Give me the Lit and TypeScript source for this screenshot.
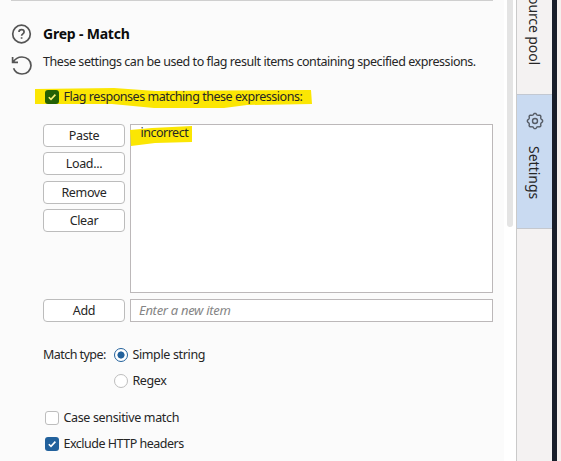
import { LitElement, html, svg, css } from "lit";
import { customElement } from "lit/decorators.js";

const gear = () => {
  let d = "";
  const n = 64;
  for (let i = 0; i < n; i++) {
    const a = (i / n) * Math.PI * 2;
    const r = 7 + 0.65 * Math.tanh(2 * Math.cos(8 * a));
    d += `${i ? "L" : "M"}${(9 + r * Math.cos(a)).toFixed(2)} ${(9 + r * Math.sin(a)).toFixed(2)}`;
  }
  return svg`<path d=${d + "Z"} /><circle cx="9" cy="9" r="2.5" />`;
};

const tick = html`<svg class="tick" viewBox="0 0 14 14"><path d="M3.8 7.2 6 9.4 10.4 4.6" /></svg>`;

@customElement("app-root")
export class AppRoot extends LitElement {
  static styles = css`
    :host {
      display: flex;
      width: 561px;
      height: 461px;
      overflow: hidden;
      background: #fff;
      color: #262626;
      font: 12.5px/20px "Noto Sans", sans-serif;
      white-space: nowrap;
    }
    svg { display: block; fill: none; }
    .main {
      box-sizing: border-box;
      width: 504px;
      padding: 0 11px;
      background: #fbfbfb;
      flex: none;
    }
    .rule { height: 1px; background: #cfcfcf; }
    .row { display: flex; align-items: center; }
    .head { height: 32px; margin-top: 17px; }
    .desc { height: 32px; }
    .ico { width: 22px; margin-right: 10px; flex: none; stroke: #555; stroke-width: 1.7; }
    .title { font-size: 14px; font-weight: 700; color: #0c0c0c; letter-spacing: -0.2px; }
    .about { letter-spacing: -0.445px; margin-top: -9px; }
    .body { margin-left: 32px; }
    .flag { position: relative; height: 26px; margin-top: 2px; margin-bottom: 14px; }
    .mark { position: absolute; fill: #fbe603; }
    .mark.a { left: -9px; top: 3px; }
    .mark.b { left: -1px; top: 1px; }
    .over { position: relative; }
    .phrase { letter-spacing: -0.46px; }
    .box {
      box-sizing: border-box;
      width: 14px;
      height: 14px;
      margin: 0 4.5px 0 2px;
      border: 1px solid #bdbdbd;
      border-radius: 3px;
      background: #fff;
      flex: none;
    }
    .box.on { border: 0; background: #22619c; }
    .box.green { background: #246105; }
    .tick { width: 14px; height: 14px; stroke: #fff; stroke-width: 1.6; }
    .green .tick { stroke: #fbf27a; }
    .edit { display: grid; grid-template-columns: 82px 363px; gap: 6px 5px; }
    .buttons { display: flex; flex-direction: column; gap: 5.3px; }
    .btn {
      box-sizing: border-box;
      height: 23px;
      border: 1px solid #bcbcbc;
      border-radius: 4px;
      background: #fff;
      text-align: center;
      line-height: 21px;
      letter-spacing: -0.35px;
    }
    .list, .input {
      box-sizing: border-box;
      border: 1px solid #bcb8b9;
      background: #fff;
      position: relative;
    }
    .list { height: 169px; padding: 0 0 0 9.5px; line-height: 16px; letter-spacing: -0.5px; }
    .input { height: 23px; padding-left: 8px; color: #858585; font-style: italic; font-size: 13px; line-height: 20px; letter-spacing: -0.3px; }
    .type { display: grid; grid-template-columns: 71px 1fr; grid-auto-rows: 26px; align-items: center; margin-top: 20px; letter-spacing: -0.35px; }
    .tight { letter-spacing: -0.55px; }
    .radio {
      box-sizing: border-box;
      width: 14px;
      height: 14px;
      border: 1px solid #bdbdbd;
      border-radius: 50%;
      margin-right: 4.4px;
      background: #fff;
    }
    .radio.on { border: 1.5px solid #22619c; background: radial-gradient(circle, #22619c 3.2px, #fff 3.9px); }
    .checks { margin-top: 11px; letter-spacing: -0.35px; }
    .checks .row { height: 26px; }
    .headers { letter-spacing: -0.5px; }
    .scroll { width: 12px; flex: none; display: flex; justify-content: center; }
    .thumb { width: 6px; height: 227px; background: #e4e4e4; border-radius: 0 0 3px 3px; }
    .tabs { box-sizing: border-box; width: 36px; border-left: 1px solid #cacaca; background: #f4f2f2; flex: none; font-size: 14px; }
    .tab { box-sizing: border-box; writing-mode: vertical-rl; width: 35px; line-height: 35px; display: flex; align-items: center; }
    .pool { height: 94px; justify-content: flex-end; padding-bottom: 29px; letter-spacing: -0.1px; }
    .settings { height: 135px; padding-top: 17px; gap: 16px; background: #c9daf1; border-top: 1px solid #c2c8d2; border-bottom: 1px solid #c5c8ce; }
    .gear { width: 18px; height: 18px; stroke: #555b65; stroke-width: 1.4; }
    .edge { width: 5px; background: #191e2a; flex: none; }
    .outer { flex: 1; background: #f5f0ee; }
  `;

  render() {
    return html`
      <div class="main">
        <div class="rule"></div>
        <div class="row head">
          <svg class="ico" height="22" viewBox="0 0 22 22">
            <circle cx="10.5" cy="11" r="8.8" />
            <path d="M8 9.1C8 7.5 9.1 6.7 10.5 6.7s2.6.9 2.6 2.3c0 1.8-2.5 1.9-2.5 3.8M10.6 14.2v1.5" />
          </svg>
          <span class="title">Grep - Match</span>
        </div>
        <div class="row desc">
          <svg class="ico" height="22" viewBox="0 0 22 22">
            <path d="M1.6 2V7.4H7M2 7.2C3.8 4.2 7 2 11 2c5 0 9 3.8 9 8.5s-4 8.5-9 8.5c-4 0-7.2-2.3-8.4-5.7" />
          </svg>
          <span class="about">These settings can be used to flag result items containing specified expressions.</span>
        </div>
        <div class="body">
          <div class="row flag">
            <svg class="mark a" width="279" height="24"><path d="M1 2 80 1 122 4 277 3 278 17 213 18 190 21 120 21 78 17 1 17Z" /></svg>
            <span class="box on green over">${tick}</span>
            <span class="over phrase">Flag responses matching these expressions:</span>
          </div>
          <div class="edit">
            <div class="buttons">
              ${["Paste", "Load...", "Remove", "Clear"].map((t) => html`<div class="btn">${t}</div>`)}
            </div>
            <div class="list">
              <svg class="mark b" width="63" height="22"><path d="M0 4 22 2 62 0 62 16 25 17 1 20Z" /></svg>
              <span class="over">incorrect</span>
            </div>
            <div class="btn">Add</div>
            <div class="input">Enter a new item</div>
          </div>
          <div class="type">
            <span class="tight">Match type:</span>
            <div class="row"><span class="radio on"></span>Simple string</div>
            <span></span>
            <div class="row"><span class="radio"></span>Regex</div>
          </div>
          <div class="checks">
            <div class="row"><span class="box"></span>Case sensitive match</div>
            <div class="row headers"><span class="box on">${tick}</span>Exclude HTTP headers</div>
          </div>
        </div>
      </div>
      <div class="scroll"><div class="thumb"></div></div>
      <div class="tabs">
        <div class="tab pool">Resource pool</div>
        <div class="tab settings"><svg class="gear" viewBox="0 0 18 18">${gear()}</svg><span>Settings</span></div>
      </div>
      <div class="edge"></div>
      <div class="outer"></div>
    `;
  }
}
